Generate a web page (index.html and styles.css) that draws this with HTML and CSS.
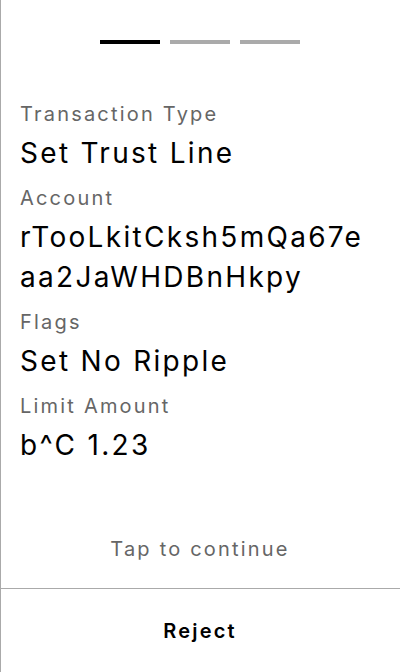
FILE: index.html
```html
<!DOCTYPE html>
<html>
<head>
<meta charset="utf-8">
<link rel="stylesheet" href="styles.css">
</head>
<body>
<div class="screen">
  <div class="progress">
    <span class="bar bar-active"></span>
    <span class="bar"></span>
    <span class="bar"></span>
  </div>
  <div class="details">
    <div class="field">
      <div class="label">Transaction Type</div>
      <div class="value">Set Trust Line</div>
    </div>
    <div class="field">
      <div class="label">Account</div>
      <div class="value">rTooLkitCksh5mQa67eaa2JaWHDBnHkpy</div>
    </div>
    <div class="field">
      <div class="label">Flags</div>
      <div class="value">Set No Ripple</div>
    </div>
    <div class="field">
      <div class="label">Limit Amount</div>
      <div class="value">b^C 1.23</div>
    </div>
  </div>
  <div class="hint">Tap to continue</div>
  <div class="footer">
    <span class="reject">Reject</span>
  </div>
</div>
</body>
</html>
```
FILE: styles.css
```css
html, body {
  margin: 0;
  padding: 0;
  background: #fff;
}
.screen {
  height: 672px;
  display: flex;
  flex-direction: column;
  box-shadow: inset 1px 0 0 #aaaaaa;
  font-family: Inter, "Noto Sans", sans-serif;
  color: #000;
}
.progress {
  display: flex;
  justify-content: center;
  gap: 10px;
  padding-top: 40px;
}
.bar {
  width: 60px;
  height: 4px;
  background: #aaaaaa;
}
.bar-active {
  background: #000;
}
.details {
  margin-top: 58px;
  padding: 0 20px;
  display: flex;
  flex-direction: column;
  gap: 13px;
}
.field {
  display: flex;
  flex-direction: column;
  gap: 7px;
}
.label {
  font-size: 20px;
  line-height: 24px;
  letter-spacing: 2.2px;
  color: #666666;
}
.value {
  font-size: 28px;
  line-height: 40px;
  letter-spacing: 2.3px;
  word-break: break-all;
}
.hint {
  margin-top: auto;
  padding-bottom: 27px;
  text-align: center;
  font-size: 20px;
  line-height: 24px;
  letter-spacing: 2.2px;
  color: #666666;
}
.footer {
  height: 83px;
  border-top: 1px solid #aaaaaa;
  display: flex;
  align-items: center;
  justify-content: center;
}
.reject {
  font-size: 20px;
  line-height: 24px;
  letter-spacing: 2.2px;
  font-weight: 600;
}
```
